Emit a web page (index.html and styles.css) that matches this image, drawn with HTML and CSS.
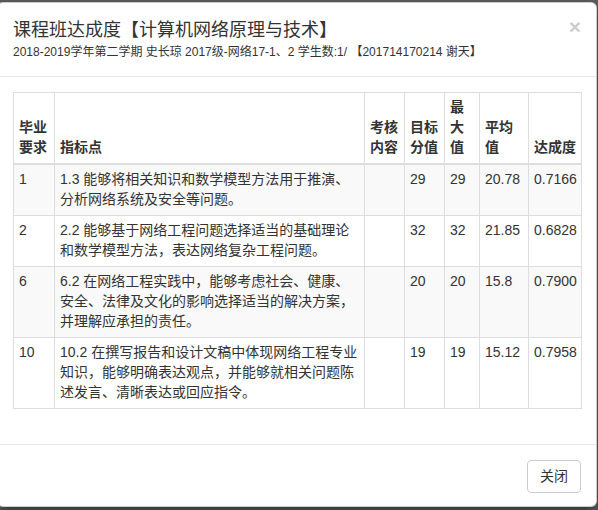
FILE: index.html
```html
<!DOCTYPE html>
<html lang="zh-CN">
<head>
<meta charset="utf-8">
<title>课程班达成度</title>
<link rel="stylesheet" href="styles.css">
</head>
<body>
<div class="modal">
  <div class="modal-header">
    <button class="close" type="button">×</button>
    <h4 class="modal-title">课程班达成度【计算机网络原理与技术】</h4>
    <div class="subtitle">2018-2019学年第二学期 史长琼 2017级-网络17-1、2 学生数:1/ 【201714170214 谢天】</div>
  </div>
  <div class="modal-body">
    <table class="table">
      <colgroup>
        <col class="c1"><col class="c2"><col class="c3"><col class="c4"><col class="c5"><col class="c6"><col class="c7">
      </colgroup>
      <thead>
        <tr>
          <th>毕业要求</th>
          <th>指标点</th>
          <th>考核内容</th>
          <th>目标分值</th>
          <th>最大值</th>
          <th>平均值</th>
          <th>达成度</th>
        </tr>
      </thead>
      <tbody>
        <tr>
          <td>1</td>
          <td>1.3 能够将相关知识和数学模型方法用于推演、<br>分析网络系统及安全等问题。</td>
          <td></td>
          <td>29</td>
          <td>29</td>
          <td>20.78</td>
          <td>0.7166</td>
        </tr>
        <tr>
          <td>2</td>
          <td>2.2 能够基于网络工程问题选择适当的基础理论<br>和数学模型方法，表达网络复杂工程问题。</td>
          <td></td>
          <td>32</td>
          <td>32</td>
          <td>21.85</td>
          <td>0.6828</td>
        </tr>
        <tr>
          <td>6</td>
          <td>6.2 在网络工程实践中，能够考虑社会、健康、<br>安全、法律及文化的影响选择适当的解决方案，<br>并理解应承担的责任。</td>
          <td></td>
          <td>20</td>
          <td>20</td>
          <td>15.8</td>
          <td>0.7900</td>
        </tr>
        <tr>
          <td>10</td>
          <td>10.2 在撰写报告和设计文稿中体现网络工程专业<br>知识，能够明确表达观点，并能够就相关问题陈<br>述发言、清晰表达或回应指令。</td>
          <td></td>
          <td>19</td>
          <td>19</td>
          <td>15.12</td>
          <td>0.7958</td>
        </tr>
      </tbody>
    </table>
  </div>
  <div class="modal-footer">
    <button class="btn" type="button">关闭</button>
  </div>
</div>
</body>
</html>
```

FILE: styles.css
```css
html, body {
  margin: 0;
  padding: 0;
}
body {
  background: #606060;
  font-family: "Liberation Sans", Arial, "Noto Sans CJK SC", sans-serif;
  font-size: 14px;
  line-height: 1.42857;
  color: #333;
  overflow: hidden;
  height: 510px;
}
.modal {
  box-sizing: border-box;
  width: 600px;
  margin: 2px 0 0 -3px;
  background: #fff;
  border: 1px solid rgba(0, 0, 0, 0.2);
  border-radius: 6px;
  box-shadow: 0 5px 15px rgba(0, 0, 0, 0.5);
}
.modal-header {
  padding: 15px;
  border-bottom: 1px solid #e5e5e5;
}
.close {
  float: right;
  margin-top: -2px;
  padding: 0;
  border: 0;
  background: transparent;
  font-family: "Liberation Sans", Arial, sans-serif;
  font-size: 21px;
  font-weight: bold;
  line-height: 1;
  color: #000;
  opacity: 0.2;
  cursor: pointer;
}
.modal-title {
  margin: 0;
  font-size: 18px;
  font-weight: 400;
  line-height: 1.42857;
}
.subtitle {
  font-size: 12px;
  line-height: 17px;
}
.modal-body {
  padding: 15px;
}
.table {
  width: 100%;
  table-layout: fixed;
  border-collapse: collapse;
  border-spacing: 0;
  border: 1px solid #ddd;
  margin-bottom: 20px;
}
.c1 { width: 41px; }
.c2 { width: 310px; }
.c3 { width: 40px; }
.c4 { width: 40px; }
.c5 { width: 35px; }
.c6 { width: 49px; }
.c7 { width: 53px; }
.table th,
.table td {
  padding: 5px;
  border: 1px solid #ddd;
  text-align: left;
  vertical-align: top;
  line-height: 1.42857;
}
.table th {
  vertical-align: bottom;
  font-weight: bold;
  border-bottom-width: 2px;
}
.table tbody tr:nth-child(odd) {
  background: #f9f9f9;
}
.modal-footer {
  padding: 15px 15px 13px;
  text-align: right;
  border-top: 1px solid #e5e5e5;
}
.btn {
  display: inline-block;
  padding: 6px 12px;
  font-family: "Liberation Sans", Arial, "Noto Sans CJK SC", sans-serif;
  font-size: 14px;
  line-height: 1.42857;
  color: #333;
  background: #fff;
  border: 1px solid #ccc;
  border-radius: 4px;
  cursor: pointer;
}
```
